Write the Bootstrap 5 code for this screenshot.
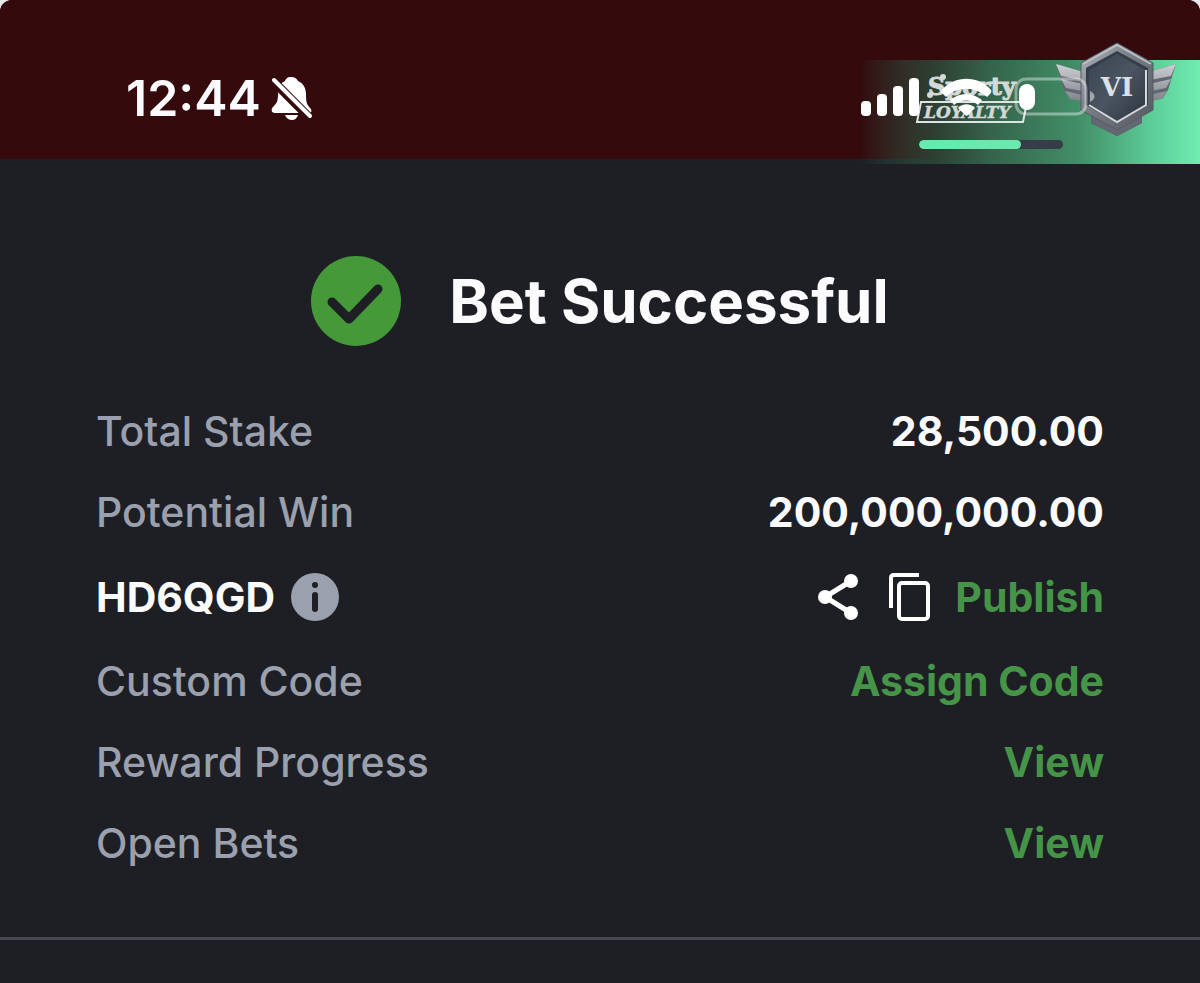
<!DOCTYPE html>
<html lang="en">
<head>
  <meta charset="utf-8">
  <meta name="viewport" content="width=device-width, initial-scale=1">
  <title>Bet Successful</title>
  <link href="https://cdn.jsdelivr.net/npm/bootstrap@5.3.0/dist/css/bootstrap.min.css" rel="stylesheet">
  <style>
    html { background: #e9eaec; }
    body {
      background: transparent;
      font-family: Inter, "Liberation Sans", sans-serif;
      color: #fbfbfd;
    }
    .phone {
      background: #1e1f24;
      border-radius: 12px 12px 0 0;
    }
    .status-bar {
      background: #340a0d;
      border-radius: 12px 12px 0 0;
      height: 159px;
      padding: 68px 0 0 126px;
    }
    .clock { font-size: 50px; font-weight: 600; line-height: 60px; }
    .loyalty {
      top: 40px;
      width: 340px;
      height: 124px;
    }
    .loyalty-progress {
      left: 59px;
      top: 100px;
      width: 144px;
      height: 9px;
      border-radius: 5px;
      background: #363c48;
    }
    .loyalty-progress .progress-bar {
      width: 71%;
      border-radius: 5px;
      background: #6be8ae;
    }
    .result { padding: 97px 0 61px; gap: 48px; }
    .result h1 { font-size: 60px; font-weight: 700; line-height: 72px; }
    .details { padding: 0 96px 69px; gap: 32px; }
    .detail-row { font-size: 41px; line-height: 49px; }
    .code-row { min-height: 56px; }
    .detail-label { color: #9ba0ae; font-weight: 500; }
    .detail-value { font-weight: 700; }
    .action { color: #459448; font-weight: 700; text-decoration: none; }
    .action:hover { color: #5bb05e; }
    .icon-button { background: none; border: 0; padding: 0; line-height: 0; }
    .divider { border-top: 3px solid #46474f; min-height: 43px; }
  </style>
</head>
<body>
  <div class="phone min-vh-100">
    <!-- Status bar -->
    <header class="status-bar position-relative">
      <div class="d-flex align-items-center gap-2">
        <span class="clock">12:44</span>
        <svg width="44" height="48" viewBox="270 74 44 48" role="img" aria-label="Silent mode">
          <path fill="#fff" d="M292 77c4 0 6 2 7 4 5 2 8 7 8 13 0 9 1 11 5 15 1 3 0 4-3 4h-33c-4 0-4-4-2-6 4-4 5-6 5-13 0-6 2-11 7-13 1-2 2-4 6-4z"/>
          <path fill="#fff" d="M286 115h13c-1 3-3 5-6 5s-6-2-7-5z"/>
          <path stroke="#340a0d" stroke-width="9" d="M273 80l38 38"/>
          <path stroke="#fff" stroke-width="4" stroke-linecap="round" d="M275 80l36 36"/>
        </svg>
      </div>

      <!-- Loyalty banner over the signal icons -->
      <div class="loyalty position-absolute end-0">
        <svg width="340" height="124" viewBox="860 40 340 124" role="img" aria-label="Sporty Loyalty level VI">
          <defs>
            <linearGradient id="mint">
              <stop offset="0" stop-color="#2c6650" stop-opacity="0"/>
              <stop offset=".2" stop-color="#2d4c3c" stop-opacity=".75"/>
              <stop offset=".38" stop-color="#34634b"/>
              <stop offset=".65" stop-color="#439069"/>
              <stop offset=".85" stop-color="#5bcb95"/>
              <stop offset="1" stop-color="#70edb2"/>
            </linearGradient>
            <linearGradient id="rim" x2="1" y2="1">
              <stop offset="0" stop-color="#b5b9bf"/>
              <stop offset=".4" stop-color="#7b8088"/>
              <stop offset="1" stop-color="#50555f"/>
            </linearGradient>
            <linearGradient id="face" x2="1" y2="1">
              <stop offset="0" stop-color="#394452"/>
              <stop offset=".5" stop-color="#4b5561"/>
              <stop offset="1" stop-color="#2b343f"/>
            </linearGradient>
            <linearGradient id="wing" x2="0" y2="1">
              <stop offset="0" stop-color="#ced0d3"/>
              <stop offset="1" stop-color="#7c8188"/>
            </linearGradient>
          </defs>
          <rect x="860" y="60" width="340" height="104" fill="url(#mint)"/>
          <!-- wordmark -->
          <g fill="#d2d9d7" font-family="'DejaVu Serif', serif" font-weight="700" font-style="italic">
            <text x="928" y="95" font-size="24" font-style="normal" stroke="#d2d9d7">Sporty</text>
            <circle cx="930" cy="95" r="3"/>
            <circle cx="943" cy="77" r="3"/>
            <path fill="none" stroke="#dee4e2" stroke-width="2" d="M921 102h106l-4 20H917z"/>
            <text x="924" y="118" font-size="17" stroke="#d2d9d7" stroke-width=".5">LOYALTY</text>
          </g>
          <!-- signal, wifi, battery -->
          <g fill="#fff">
            <rect x="861" y="101" width="10" height="15" rx="4"/>
            <rect x="877" y="94" width="10" height="22" rx="4"/>
            <rect x="893" y="86" width="10" height="30" rx="4"/>
            <rect x="909" y="78" width="10" height="38" rx="4"/>
            <path d="M942 90c13-15 36-15 49 0 1 1 0 3-1 4l-3 3c-12-11-30-11-41 0l-4-4c-1-1-1-2 0-3z"/>
            <path d="M950 100c10-8 22-8 32 0l-4 5c-7-6-17-6-24 0l-4-5z"/>
            <path d="M958 108c5-5 12-5 17 0l-7 7c-1 1-2 1-3 0z"/>
            <rect x="1019" y="84" width="16" height="26" rx="8"/>
          </g>
          <!-- wings and shield -->
          <path fill="#626871" d="M1056 64l35 10v29l-22-5-5-8-3-10zM1176 64l-35 10v29l22-5 5-8 3-10z"/>
          <g fill="url(#wing)">
            <path d="M1056 64l31 9v8l-26-5zM1061 79l26 6v7l-21-4zM1065 91l22 5v6l-17-3z"/>
            <path d="M1176 64l-31 9v8l26-5zM1171 79l-26 6v7l21-4zM1167 91l-22 5v6l17-3z"/>
          </g>
          <path fill="#454a56" d="M1091 109h51v14l-25 13-26-13z"/>
          <path fill="#626771" d="M1091 116l26 12 25-12v7l-25 13-26-13z"/>
          <path fill="url(#rim)" stroke="#555a63" d="M1117 43l36 20v47l-36 20-36-20V63z"/>
          <path fill="none" stroke="#bac0c5" stroke-width="2" d="M1083 64l34-19 34 19"/>
          <path fill="#353e4a" d="M1117 51l31 17v37l-31 18-31-18V68z"/>
          <path fill="url(#face)" d="M1117 54l28 16v33l-28 18-28-18V70z"/>
          <path fill="none" stroke="#d6dadd" stroke-width="2" d="M1089 105l28 17 29-17V70"/>
          <text x="1117" y="96" text-anchor="middle" fill="#dce1e5" font-family="'DejaVu Serif', serif" font-weight="700" font-size="26">VI</text>
          <path fill="none" stroke="#fff" stroke-opacity=".4" stroke-width="3" d="M1027 79h48c7 0 11 4 11 11v13c0 7-4 11-11 11h-48c-7 0-11-4-11-11V90c0-7 4-11 11-11z"/>
          <path fill="#b7bbc0" fill-opacity=".8" d="M1090 91c6 3 6 8 0 11z"/>
        </svg>
        <div class="progress loyalty-progress position-absolute" role="progressbar" aria-label="Level progress" aria-valuenow="71" aria-valuemin="0" aria-valuemax="100">
          <div class="progress-bar"></div>
        </div>
      </div>
    </header>

    <main>
      <div class="result d-flex justify-content-center align-items-center">
        <svg width="90" height="90" viewBox="0 0 90 90" aria-hidden="true">
          <circle cx="45" cy="45" r="45" fill="#459939"/>
          <path d="M21 46l17 17 29-30" fill="none" stroke="#1e1f24" stroke-width="9" stroke-linecap="round" stroke-linejoin="round"/>
        </svg>
        <h1 class="mb-0">Bet Successful</h1>
      </div>

      <div class="details d-flex flex-column">
        <div class="detail-row d-flex justify-content-between">
          <span class="detail-label">Total Stake</span>
          <span class="detail-value">28,500.00</span>
        </div>
        <div class="detail-row d-flex justify-content-between">
          <span class="detail-label">Potential Win</span>
          <span class="detail-value">200,000,000.00</span>
        </div>
        <div class="detail-row code-row d-flex justify-content-between align-items-center">
          <div class="d-flex align-items-center gap-3">
            <span class="detail-value">HD6QGD</span>
            <button class="icon-button" type="button" aria-label="About this code">
              <svg width="48" height="48" viewBox="0 0 48 48">
                <circle cx="24" cy="24" r="24" fill="#9ba0ae"/>
                <circle cx="24" cy="12" r="3" fill="#1e1f24"/>
                <path d="M24 22v14" stroke="#1e1f24" stroke-width="6" stroke-linecap="round"/>
              </svg>
            </button>
          </div>
          <div class="d-flex align-items-center">
            <button class="icon-button me-4" type="button" aria-label="Share">
              <svg width="48" height="48" viewBox="0 0 48 48">
                <path d="M34 8L8 24l26 16" fill="none" stroke="#fff" stroke-width="5"/>
                <g fill="#fff">
                  <circle cx="34" cy="8" r="7"/>
                  <circle cx="8" cy="24" r="7"/>
                  <circle cx="34" cy="40" r="7"/>
                </g>
              </svg>
            </button>
            <button class="icon-button me-4" type="button" aria-label="Copy code">
              <svg width="42" height="48" viewBox="0 0 42 48">
                <path d="M2 35V5q0-3 3-3h25" fill="none" stroke="#fff" stroke-width="4"/>
                <rect x="10" y="10" width="29" height="36" rx="3" fill="none" stroke="#fff" stroke-width="4"/>
              </svg>
            </button>
            <a class="action" href="#publish">Publish</a>
          </div>
        </div>
        <div class="detail-row d-flex justify-content-between">
          <span class="detail-label">Custom Code</span>
          <a class="action" href="#assign">Assign Code</a>
        </div>
        <div class="detail-row d-flex justify-content-between">
          <span class="detail-label">Reward Progress</span>
          <a class="action" href="#rewards">View</a>
        </div>
        <div class="detail-row d-flex justify-content-between">
          <span class="detail-label">Open Bets</span>
          <a class="action" href="#bets">View</a>
        </div>
      </div>
      <div class="divider"></div>
    </main>
  </div>
  <script src="https://cdn.jsdelivr.net/npm/bootstrap@5.3.0/dist/js/bootstrap.bundle.min.js"></script>
</body>
</html>
